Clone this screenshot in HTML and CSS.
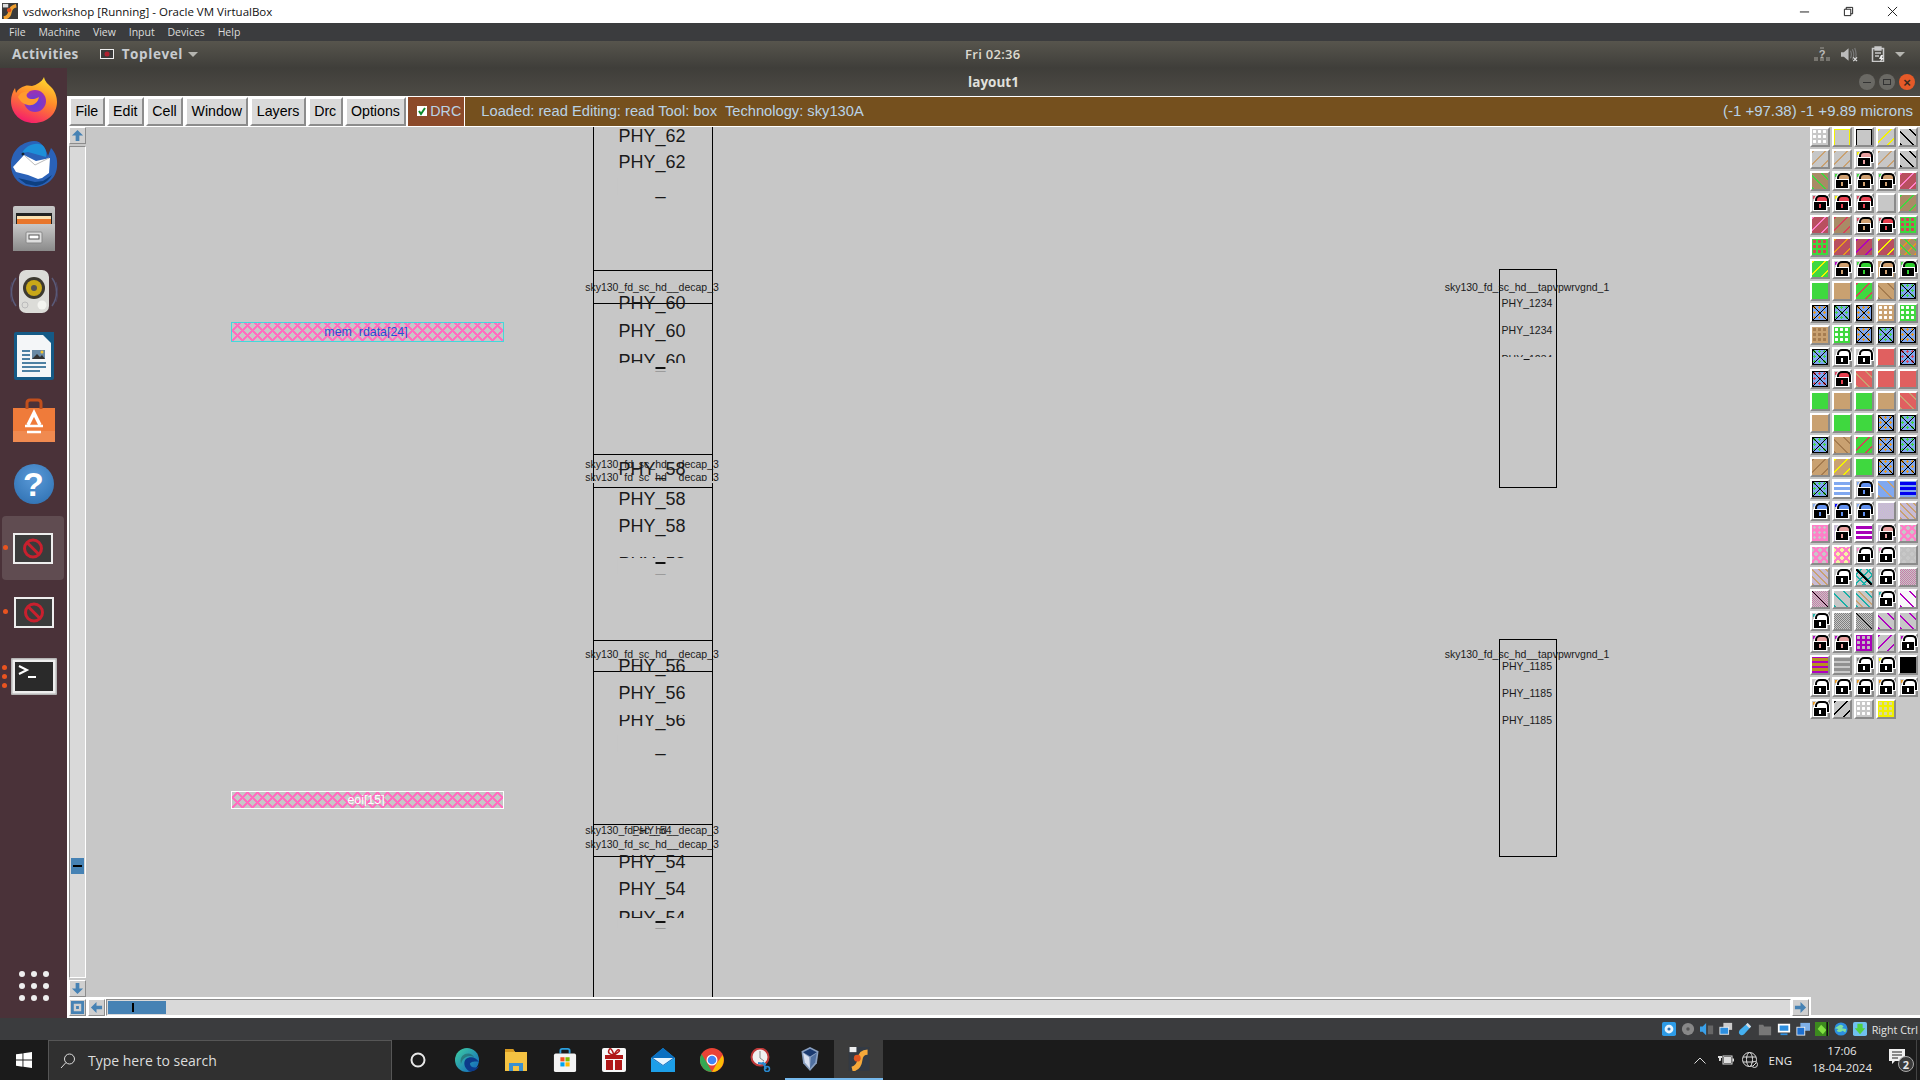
FILE: index.html
```html
<!DOCTYPE html>
<html lang="en">
<head>
<meta charset="utf-8">
<title>vsdworkshop [Running] - Oracle VM VirtualBox</title>
<link rel="stylesheet" href="styles.css">
</head>
<body>
<div class="screen">
  <header class="win-title">
    <svg class="win-logo" viewBox="0 0 18 18"><rect width="18" height="18" fill="#3a3a3a"/><rect x="1" y="1" width="6" height="4" fill="#ddd"/><path d="M2 17 Q8 16 9 10 T16 3" stroke="#f0a030" stroke-width="4" fill="none"/><circle cx="8" cy="8" r="2.5" fill="#e05020"/></svg>
    <span class="win-name">vsdworkshop [Running] - Oracle VM VirtualBox</span>
    <div class="win-controls">
      <svg viewBox="0 0 12 12"><path d="M1 6.500H11" stroke="#111" fill="none"/></svg>
      <svg viewBox="0 0 12 12"><path d="M1.500 3.500H8.500V10.500H1.500ZM3.500 3.500V1.500H10.500V8.500H8.500" stroke="#111" fill="none"/></svg>
      <svg viewBox="0 0 12 12"><path d="M1 1L11 11M11 1L1 11" stroke="#111" fill="none"/></svg>
    </div>
  </header>
  <nav class="vbox-menu">
    <span>File</span><span>Machine</span><span>View</span><span>Input</span><span>Devices</span><span>Help</span>
  </nav>
  <div class="gnome-top">
    <div class="gt-left">
      <span class="gt-activities">Activities</span>
      <svg class="gt-app" viewBox="0 0 14 10"><rect x="0.500" y="0.500" width="13" height="9" fill="#3a3a3a" stroke="#eee"/><circle cx="7" cy="5" r="2.500" fill="#b02030"/></svg>
      <span class="gt-toplevel">Toplevel</span>
      <span class="caret"></span>
    </div>
    <span class="gt-clock">Fri 02:36</span>
    <div class="gt-right">
      <svg class="ic-net" viewBox="0 0 16 16"><path d="M0 11h4v4H0zM6 11h4v4H6zM12 11h4v4H12zM6 1h4v2H6z" fill="#77756f"/><text x="8" y="12" class="qm">?</text></svg>
      <svg class="ic-vol" viewBox="0 0 18 14"><path d="M0 4.500h3l5-4v13l-5-4H0z" fill="#bbb"/><path d="M10 3q2 4 0 8M12 1.500q3 5.500 0 11M14.500 0q3 7 0 14" stroke="#777" stroke-width="1.300" fill="none"/><path d="M13 10l4 4M17 10l-4 4" stroke="#ddd" stroke-width="1.300"/></svg>
      <svg class="ic-clip" viewBox="0 0 14 16"><path d="M1.500 2.500h11v13h-11z" fill="none" stroke="#c9c9c9" stroke-width="1.500"/><path d="M4 1h6v3H4zM4 7h6M4 10h4" stroke="#c9c9c9" stroke-width="1.300" fill="#c9c9c9"/><path d="M10 9l-2 4h2l-1 3 4-4h-2l1-3z" fill="#eee"/></svg>
      <span class="caret light"></span>
    </div>
  </div>
  <div class="desk">
    <aside class="dock">
      <div class="dock-item">
        <svg viewBox="0 0 46 46" class="d46"><defs><linearGradient id="ffa" x1="0.700" y1="0" x2="0.300" y2="1"><stop offset="0" stop-color="#ffd92e"/><stop offset="0.450" stop-color="#ff8a2a"/><stop offset="1" stop-color="#f5186e"/></linearGradient><radialGradient id="ffb" cx="0.500" cy="0.600" r="0.600"><stop offset="0" stop-color="#5a40e0"/><stop offset="1" stop-color="#a030b0"/></radialGradient></defs><path d="M33 0c1 5 4 7 8 11 4 5 5 10 5 14 0 12-10 21-23 21S0 37 0 24c0-5 2-10 4-13l1 5c2-4 5-6 9-7 3-1 5 0 7 0 4-1 10-4 12-9z" fill="url(#ffa)"/><circle cx="24" cy="24" r="11" fill="url(#ffb)"/><path d="M7 20c2-5 7-6 11-5-3 2-3 4-1 6 3 2 8 1 11-1-1 6-6 9-11 8-5-1-8-4-10-8z" fill="#ff9a2e"/></svg>
      </div>
      <div class="dock-item">
        <svg viewBox="0 0 48 48" class="d48"><path d="M24 1C10 2 1 12 1 25c0 13 10 22 23 22 12 0 22-8 23-20 1-9-2-15-6-19l-3 8C36 9 32 1 24 1z" fill="#2a62b8"/><path d="M12 13c3-6 10-10 17-9 6 1 8 7 7 13L18 12z" fill="#1d8fd8"/><circle cx="13" cy="14" r="1.500" fill="#123"/><path d="M3 27l11-12 12 6 14-3-1 15-7 5-4 1-10-4-12-3z" fill="#fff"/><path d="M14 15l11 10 14-7" stroke="#bbb" fill="none"/><path d="M8 38l8 6 10 2c6-1 12-4 16-11l-9 6-8 1z" fill="#0d3f80"/></svg>
      </div>
      <div class="dock-item">
        <svg viewBox="0 0 42 45" class="d42"><defs><linearGradient id="cab" x1="0" y1="0" x2="0" y2="1"><stop offset="0" stop-color="#c8c8c8"/><stop offset="1" stop-color="#8a8a8a"/></linearGradient></defs><rect width="42" height="45" rx="2" fill="url(#cab)"/><rect x="3" y="7" width="36" height="14" fill="#222"/><rect x="4" y="10" width="34" height="3" fill="#fbe0b0"/><rect x="4" y="13" width="34" height="5" fill="#e8762c"/><rect y="18" width="42" height="27" fill="url(#cab)"/><rect x="13" y="26" width="16" height="11" rx="1" fill="#ddd" stroke="#888"/><rect x="16" y="29" width="10" height="4" fill="#fff" stroke="#555"/></svg>
      </div>
      <div class="dock-item">
        <svg viewBox="0 0 48 44" class="d48s"><path d="M6 8a24 24 0 0 0 0 28M42 8a24 24 0 0 1 0 28" stroke="#5a5a78" stroke-width="1.500" fill="none"/><path d="M2 12a30 30 0 0 0 0 20M46 12a30 30 0 0 1 0 20" stroke="#4f4560" fill="none"/><rect x="9" y="0" width="30" height="43" rx="7" fill="#dcdcd8"/><circle cx="24" cy="18" r="11" fill="#3d3a30"/><circle cx="24" cy="18" r="8" fill="#c8a818"/><circle cx="24" cy="18" r="3" fill="#555"/><circle cx="32" cy="35" r="4.500" fill="#f4f4f0"/><circle cx="15" cy="35" r="3" fill="none" stroke="#bbb"/></svg>
      </div>
      <div class="dock-item">
        <svg viewBox="0 0 40 48" class="d40"><rect width="40" height="48" rx="2" fill="#155a86"/><path d="M3 3h26l8 8v34H3z" fill="#f4f6f8"/><path d="M28 0h12v12L28 1z" fill="#155a86"/><rect x="18" y="18" width="13" height="9" fill="#6a8aa5"/><path d="M18 27l5-5 3 3 2-2 3 4z" fill="#333"/><circle cx="28" cy="20" r="1.500" fill="#f2c430"/><path d="M8 19h8M8 23h8M8 27h8M8 31h24M8 35h24M8 39h18" stroke="#155a86" stroke-width="1.700"/></svg>
      </div>
      <div class="dock-item">
        <svg viewBox="0 0 42 43" class="d42"><path d="M0 9h42v34H0z" fill="#ef7b3a"/><path d="M0 32h42v11H0z" fill="#f08a50"/><path d="M14 10V4q0-3 3-3h8q3 0 3 3v6" stroke="#c24f1c" stroke-width="3" fill="none"/><path d="M15 26 21 14 27 26" stroke="#fff" stroke-width="3.500" fill="none"/><path d="M12 27h18M14 33h14" stroke="#fff" stroke-width="2.500"/></svg>
      </div>
      <div class="dock-item">
        <div class="help"><span>?</span></div>
      </div>
      <div class="dock-item active">
        <span class="pip one"></span>
        <svg viewBox="0 0 40 31" class="d40s"><use href="#noentry"/></svg>
      </div>
      <div class="dock-item">
        <span class="pip one"></span>
        <svg viewBox="0 0 40 31" class="d40s"><use href="#noentry"/></svg>
      </div>
      <div class="dock-item">
        <span class="pips"><i></i><i></i><i></i></span>
        <svg viewBox="0 0 46 37" class="d46s"><rect width="46" height="37" rx="1" fill="#b5b5b5"/><rect x="1.500" y="1.500" width="43" height="34" fill="#eee"/><rect x="4" y="4" width="38" height="29" fill="#2a2a2a"/><path d="M8 8l8 4-8 4" stroke="#fff" stroke-width="2" fill="none"/><path d="M17 19h8" stroke="#fff" stroke-width="2"/></svg>
      </div>
      <div class="dock-grid"><i></i><i></i><i></i><i></i><i></i><i></i><i></i><i></i><i></i></div>
    </aside>
    <main class="desk-main">
      <div class="gnome-title">
        <span></span>
        <span class="gn-name">layout1</span>
        <div class="gn-btns">
          <span class="gn-btn"><i class="bar"></i></span>
          <span class="gn-btn"><i class="sq"></i></span>
          <span class="gn-btn close">×</span>
        </div>
      </div>
      <section class="app">
        <div class="toolbar">
          <button class="tb">File</button>
          <button class="tb">Edit</button>
          <button class="tb">Cell</button>
          <button class="tb">Window</button>
          <button class="tb">Layers</button>
          <button class="tb">Drc</button>
          <button class="tb">Options</button>
          <div class="drc">
            <svg viewBox="0 0 10 10" class="chk"><rect width="10" height="10" fill="#fff"/><path d="M2 5l2 3 4-6" stroke="#0a8a2a" stroke-width="2" fill="none"/></svg>
            <span>DRC</span>
          </div>
          <div class="status">
            <span class="st-l">Loaded: read Editing: read Tool: box&nbsp; Technology: sky130A</span>
            <span class="st-r">(-1 +97.38) -1 +9.89 microns</span>
          </div>
        </div>
        <div class="work">
          <div class="vscroll">
            <div class="sb-btn"><svg viewBox="0 0 14 14"><path d="M7 1l6 6H9v6H5V7H1z" fill="#4682b4"/></svg></div>
            <div class="v-trough"><div class="v-thumb"><i></i></div></div>
            <div class="sb-btn"><svg viewBox="0 0 14 14"><path d="M7 13l6-6H9V1H5v6H1z" fill="#4682b4"/></svg></div>
          </div>
          <div class="canvas">
            <div class="cell lc bt-a"></div>
            <div class="cell lc bt-b"></div>
            <div class="cell lc bt-c"></div>
            <div class="cell lc bt-d"></div>
            <div class="cell lc bt-e"></div>
            <div class="cell rc rb-a"></div>
            <div class="cell rc rb-b"></div>

            <div class="pin pin-a"><span>mem_rdata[24]</span></div>
            <div class="pin pin-b"><span>eoi[15]</span></div>

            <span class="lb big xl y9">PHY_62</span>
            <span class="lb big xl y35">PHY_62</span>
            <span class="lb big xl y61 cut-full">PHY_62</span>
            <span class="lb sm xl y160">sky130_fd_sc_hd__decap_3</span>
            <span class="lb big xl y176">PHY_60</span>
            <span class="lb big xl y204">PHY_60</span>
            <span class="lb big xl y234 cut-a">PHY_60</span>
            <span class="lb sm xl y337">sky130_fd_sc_hd__decap_3</span>
            <span class="lb sm xl y350 cut-b">sky130_fd_sc_hd__decap_3</span>
            <span class="lb big xl y342">PHY_58</span>
            <span class="lb big xl y372">PHY_58</span>
            <span class="lb big xl y399">PHY_58</span>
            <span class="lb big xl y437 cut-tip">PHY_58</span>
            <span class="lb sm xl y527">sky130_fd_sc_hd__decap_3</span>
            <span class="lb big xl y539">PHY_56</span>
            <span class="lb big xl y566">PHY_56</span>
            <span class="lb big xl y593 cut-top">PHY_56</span>
            <span class="lb big xl y618 cut-full">PHY_56</span>
            <span class="lb sm xl y703">sky130_fd_sc_hd__decap_3</span>
            <span class="lb sm xl y703">PHY_54</span>
            <span class="lb sm xl y717">sky130_fd_sc_hd__decap_3</span>
            <span class="lb big xl y735">PHY_54</span>
            <span class="lb big xl y762">PHY_54</span>
            <span class="lb big xl y791 cut-c">PHY_54</span>

            <span class="lb sm xr y160">sky130_fd_sc_hd__tapvpwrvgnd_1</span>
            <span class="lb sm xr y176">PHY_1234</span>
            <span class="lb sm xr y203">PHY_1234</span>
            <span class="lb sm xr y232 cut-s">PHY_1234</span>
            <span class="lb sm xr y527">sky130_fd_sc_hd__tapvpwrvgnd_1</span>
            <span class="lb sm xr y539">PHY_1185</span>
            <span class="lb sm xr y566">PHY_1185</span>
            <span class="lb sm xr y593">PHY_1185</span>
          </div>
          <div class="palette">
            <i class="c dt fW"></i><i class="c ybox"></i><i class="c kbox"></i><i class="c sl fY"></i><i class="c bs fK"></i>
            <i class="c sl fT"></i><i class="c sl fT"></i><i class="c l dt fY kP"></i><i class="c sl fT"></i><i class="c bs fK"></i>
            <i class="c bs bB fG"></i><i class="c l dt fG kB"></i><i class="c l dt fG kB"></i><i class="c l dt fG kB"></i><i class="c sl bR fP"></i>
            <i class="c l dt fR kR"></i><i class="c l dt fY kR"></i><i class="c l dt fR kR"></i><i class="c"></i><i class="c dh bB fG"></i>
            <i class="c sl bR fP"></i><i class="c dh bB fR"></i><i class="c l dt fR kB"></i><i class="c l dt fR kR"></i><i class="c dt bG fR"></i>
            <i class="c dt bG fR"></i><i class="c sl bR fO"></i><i class="c sl bR fM"></i><i class="c sl bR fY"></i><i class="c bs sl2 bB fG"></i>
            <i class="c sl bG fY"></i><i class="c l dt fM kB"></i><i class="c l dt fG kG"></i><i class="c l bT kB"></i><i class="c l dt fG kG"></i>
            <i class="c bG"></i><i class="c bT"></i><i class="c dh bG fR"></i><i class="c dh2 bT fB"></i><i class="c xx fG"></i>
            <i class="c xx fO"></i><i class="c xx fG"></i><i class="c xx fO"></i><i class="c dt bT fW"></i><i class="c dt bG fW"></i>
            <i class="c dt bT fB"></i><i class="c dt bG fW"></i><i class="c xx fO"></i><i class="c xx fG"></i><i class="c xx fO"></i>
            <i class="c xx fG"></i><i class="c l"></i><i class="c l"></i><i class="c bS"></i><i class="c xx fR"></i>
            <i class="c xx fR"></i><i class="c l dt fR kR"></i><i class="c bs bS fT"></i><i class="c bS"></i><i class="c bS"></i>
            <i class="c bG"></i><i class="c bT"></i><i class="c bG"></i><i class="c bT"></i><i class="c bs bS fT"></i>
            <i class="c bT"></i><i class="c bG"></i><i class="c bG"></i><i class="c xx fO"></i><i class="c xx fG"></i>
            <i class="c xx fG"></i><i class="c dh2 bT fB"></i><i class="c dh bG fR"></i><i class="c xx fO"></i><i class="c xx fG"></i>
            <i class="c sl bT fB"></i><i class="c sl bT fY"></i><i class="c bG"></i><i class="c xx fO"></i><i class="c xx fO"></i>
            <i class="c xx fG"></i><i class="c wv bL fW"></i><i class="c l dt fL kL"></i><i class="c bs bL fT"></i><i class="c wv bN fL"></i>
            <i class="c l dt fL kL"></i><i class="c l dt fN kL"></i><i class="c l dt fL kL"></i><i class="c fine fA"></i><i class="c bs fine fT"></i>
            <i class="c lat2 bP"></i><i class="c l fine fA kP"></i><i class="c wv bM fW"></i><i class="c l fine fA kP"></i><i class="c lat fP"></i>
            <i class="c lat fP"></i><i class="c lat bY fP"></i><i class="c l dt fP kW"></i><i class="c l dt fP kW"></i><i class="c lat fG2"></i>
            <i class="c bs fine fT2"></i><i class="c l"></i><i class="c hatch"></i><i class="c l"></i><i class="c fine fP2"></i>
            <i class="c bs fine fP2 kline"></i><i class="c bs fC"></i><i class="c bs fC sl3"></i><i class="c l dt fC kW"></i><i class="c dh2 bW fM"></i>
            <i class="c l dt fC kW"></i><i class="c fine fG3"></i><i class="c bs fine fG3 kline"></i><i class="c bs fM"></i><i class="c bs fM"></i>
            <i class="c l dt fM kP"></i><i class="c l dt fM kP"></i><i class="c dt bM fG2"></i><i class="c sl fM"></i><i class="c l dt fM kW"></i>
            <i class="c wv bO fM"></i><i class="c wv bG3 fG4"></i><i class="c l dt fG3 kW"></i><i class="c l dt fY kW"></i><i class="c bK"></i>
            <i class="c l"></i><i class="c l dt fO kW"></i><i class="c l dt fO kW"></i><i class="c l dt fO kW"></i><i class="c l dt fO kW"></i>
            <i class="c l dt fO kW"></i><i class="c sl fK"></i><i class="c dt fW"></i><i class="c dt bY2 fGY"></i>
          </div>
        </div>
        <div class="hscroll">
          <div class="sb-btn"><svg viewBox="0 0 14 14"><path d="M0 0h14v14H0zM3 3v8h8V3zM5.500 5.500h3v3h-3z" fill="#4682b4" fill-rule="evenodd"/></svg></div>
          <div class="sb-btn"><svg viewBox="0 0 14 14"><path d="M1 7l6-6v4h6v4H7v4z" fill="#4682b4"/></svg></div>
          <div class="h-trough"><div class="h-thumb"><i></i></div></div>
          <div class="sb-btn"><svg viewBox="0 0 14 14"><path d="M13 7L7 1v4H1v4h6v4z" fill="#4682b4"/></svg></div>
          <div class="h-rest"></div>
        </div>
      </section>
    </main>
  </div>
  <div class="vbox-status">
    <svg viewBox="0 0 16 16"><rect width="16" height="16" rx="2" fill="#2d9be6"/><circle cx="8" cy="8" r="5" fill="#e8f4fc"/><circle cx="8" cy="8" r="1.800" fill="#2d6fb0"/></svg>
    <svg viewBox="0 0 16 16"><circle cx="8" cy="8" r="7" fill="#888"/><circle cx="8" cy="8" r="2" fill="#555"/></svg>
    <svg viewBox="0 0 16 16"><path d="M0 5h3l4-4v14l-4-4H0z" fill="#3aa0e8"/><rect x="9" y="4" width="6" height="10" fill="#666"/></svg>
    <svg viewBox="0 0 16 16"><rect x="5" y="1" width="10" height="8" fill="#ccc"/><rect x="1" y="6" width="10" height="8" fill="#2d8fe0" stroke="#eee"/></svg>
    <svg viewBox="0 0 16 16"><path d="M11 1l4 4-8 9q-3 2-5 0t0-5z" fill="#45b0f0"/><path d="M11 1l4 4-2 2-4-4z" fill="#ddd"/></svg>
    <svg viewBox="0 0 16 16"><path d="M1 3h5l1 2h8v10H1z" fill="#777"/></svg>
    <svg viewBox="0 0 16 16"><rect x="1" y="2" width="14" height="10" fill="#fff"/><rect x="3" y="4" width="10" height="6" fill="#2d8fe0"/><rect x="4" y="13" width="8" height="2" fill="#2d8fe0"/></svg>
    <svg viewBox="0 0 16 16"><rect x="5" y="1" width="11" height="9" fill="#7fb0e8"/><rect x="1" y="6" width="9" height="9" fill="#1d6fd0" stroke="#eee"/></svg>
    <svg viewBox="0 0 16 16"><rect width="16" height="16" fill="#3c8a1e"/><path d="M3 8l4-5 6 6-4 5z" fill="#7fe040"/><path d="M13 0h2v16h-2z" fill="#111"/></svg>
    <svg viewBox="0 0 16 16"><circle cx="8" cy="8" r="7.500" fill="#2d8fe0"/><path d="M4 5q4-4 7 0l-2 2 5 1-1 4-3-2q-4 3-7 0l2-2-4-1z" fill="#7fe0a0"/></svg>
    <svg viewBox="0 0 16 16"><rect width="16" height="16" rx="2" fill="#6fc0f0"/><path d="M5 2h6v5h3l-6 7-6-7h3z" fill="#50d040"/></svg>
    <span class="rctrl">Right Ctrl</span>
  </div>
  <footer class="taskbar">
    <div class="tk-start"><svg viewBox="0 0 16 16"><path d="M0 2.300l6.500-.9v6.200H0zM7.400 1.300L16 0v7.600H7.400zM0 8.500h6.500v6.200L0 13.800zM7.400 8.500H16V16l-8.600-1.200z" fill="#fff"/></svg></div>
    <div class="tk-search">
      <svg viewBox="0 0 16 16"><circle cx="9.500" cy="6" r="5" fill="none" stroke="#ddd"/><path d="M6 9.500L1 15" stroke="#ddd"/></svg>
      <span>Type here to search</span>
    </div>
    <div class="tk-apps">
      <div class="tk-app"><svg class="t16" viewBox="0 0 16 16"><circle cx="8" cy="8" r="6.500" fill="none" stroke="#e8e8e8" stroke-width="2"/></svg></div>
      <div class="tk-app"><svg viewBox="0 0 24 24"><defs><linearGradient id="edg" x1="0" y1="0" x2="1" y2="1"><stop offset="0" stop-color="#3fd0a0"/><stop offset="1" stop-color="#1060c0"/></linearGradient></defs><circle cx="12" cy="12" r="12" fill="url(#edg)"/><path d="M24 14c-3-5-9-6-13-3-3 3-2 9 3 12 5 1 8-1 10-5-4 3-9 1-9-2 0-2 5-3 9-2z" fill="#0c3a8a"/><path d="M10 6q6-2 9 3-4-2-8 0-4 2-5 7-2-7 4-10z" fill="#1c1c1c" opacity="0.300"/></svg></div>
      <div class="tk-app"><svg viewBox="0 0 22 24"><path d="M0 1h8l2 3h12v19H0z" fill="#f5c242"/><path d="M0 1h8l2 3H0z" fill="#d89a20"/><rect x="4" y="15" width="14" height="8" fill="#3a90d0"/><rect x="8" y="18" width="6" height="5" fill="#f5c242"/></svg></div>
      <div class="tk-app"><svg viewBox="0 0 24 26"><path d="M7 6V3q0-2 2-2h6q2 0 2 2v3" fill="none" stroke="#2aa0e0" stroke-width="2"/><rect y="6" width="24" height="20" rx="2" fill="#f4f4f4"/><rect x="7" y="10" width="4.500" height="4.500" fill="#f25022"/><rect x="12.500" y="10" width="4.500" height="4.500" fill="#7fba00"/><rect x="7" y="15.500" width="4.500" height="4.500" fill="#00a4ef"/><rect x="12.500" y="15.500" width="4.500" height="4.500" fill="#ffb900"/></svg></div>
      <div class="tk-app"><svg viewBox="0 0 24 24"><rect width="24" height="24" rx="2" fill="#f8f8f8"/><rect x="3" y="7" width="18" height="4" fill="#b01818"/><rect x="4" y="12" width="7" height="10" fill="#b01818"/><rect x="13" y="12" width="7" height="10" fill="#b01818"/><path d="M12 7Q5 6 7 2t5 5q3-6 5-5t-5 5z" fill="none" stroke="#b01818" stroke-width="1.500"/></svg></div>
      <div class="tk-app"><svg viewBox="0 0 24 24"><path d="M12 0l12 10v14H0V10z" fill="#1d9fe8"/><path d="M0 10h24l-12 8z" fill="#c8ecff"/><path d="M12 0l12 10-12 8L0 10z" fill="#0a6fc0"/><path d="M2 10h20l-10 7z" fill="#e8f6ff"/></svg></div>
      <div class="tk-app"><svg viewBox="0 0 24 24"><circle cx="12" cy="12" r="12" fill="#ea4335"/><path d="M12 24A12 12 0 0 1 1.600 6L7 15z" fill="#34a853"/><path d="M12 24l5-9 5.600-8A12 12 0 0 1 12 24z" fill="#fbbc05"/><circle cx="12" cy="12" r="5.500" fill="#fff"/><circle cx="12" cy="12" r="4.300" fill="#4285f4"/></svg></div>
      <div class="tk-app"><svg viewBox="0 0 24 24"><circle cx="11" cy="9" r="8.500" fill="#f0f0f0" stroke="#c03838" stroke-width="2"/><path d="M11 3v7l4 3" stroke="#888" fill="none"/><path d="M14 14l3 7M9 15l8 1" stroke="#2a8ad0" stroke-width="2" fill="none"/><circle cx="18" cy="21" r="2.500" fill="none" stroke="#2a8ad0" stroke-width="1.500"/></svg></div>
      <div class="tk-app"><svg viewBox="0 0 22 28"><path d="M11 0l10 5-2 14-8 9-8-9L1 5z" fill="#8aa0c0"/><path d="M11 2l8 4-8 5-8-5z" fill="#1a3a70"/><path d="M3 7l7 5 1 13-6-7z" fill="#d8e0f0"/><path d="M19 7l-7 5-1 13 6-7z" fill="#5070a0"/></svg></div>
      <div class="tk-app on"><svg viewBox="0 0 24 28"><rect width="24" height="28" fill="#333a44"/><rect x="1" y="0" width="8" height="6" fill="#eee"/><path d="M4 26Q12 24 13 15T22 6" stroke="#f5a83a" stroke-width="6" fill="none"/><circle cx="10" cy="13" r="4" fill="#e05520"/></svg></div>
    </div>
    <div class="tk-tray">
      <svg class="ti-chev" viewBox="0 0 12 7"><path d="M0.500 6.500L6 1l5.500 5.500" fill="none" stroke="#ddd"/></svg>
      <svg class="ti-bat" viewBox="0 0 16 10"><path d="M0 1v2h4V1zM1 3h2v2q0 1-1 1H1z" fill="#ddd"/><rect x="5" y="1" width="9" height="8" fill="none" stroke="#ddd"/><rect x="6" y="2" width="7" height="6" fill="#ddd"/><rect x="14.500" y="3.500" width="1.500" height="3" fill="#ddd"/></svg>
      <svg class="ti-net" viewBox="0 0 16 16"><circle cx="7.500" cy="7.500" r="7" fill="none" stroke="#ddd"/><ellipse cx="7.500" cy="7.500" rx="3" ry="7" fill="none" stroke="#ddd"/><path d="M1 5h13M1 10h13" stroke="#ddd"/><circle cx="12.500" cy="12.500" r="3" fill="#1c1c1c" stroke="#ddd"/><path d="M11 14l3-3" stroke="#ddd"/></svg>
      <span class="ti-eng">ENG</span>
      <div class="ti-clock"><span>17:06</span><span>18-04-2024</span></div>
      <div class="ti-note">
        <svg viewBox="0 0 16 16"><path d="M0 0h16v12H6l-3 3v-3H0z" fill="#f0f0f0"/><path d="M3 3h10M3 6h10M3 9h6" stroke="#222"/></svg>
        <span class="ti-badge">2</span>
      </div>
      <span class="ti-edge"></span>
    </div>
  </footer>
</div>
<svg class="defs" width="0" height="0"><defs><g id="noentry"><rect width="40" height="31" fill="#eee"/><rect x="2" y="2" width="36" height="27" fill="#3b3b3b"/><circle cx="20" cy="15.500" r="8.500" fill="none" stroke="#c8202e" stroke-width="3"/><path d="M14 9.500l12 12" stroke="#c8202e" stroke-width="3"/></g></defs></svg>
</body>
</html>
```
FILE: styles.css
```css
* { box-sizing: border-box; }
html, body { margin: 0; padding: 0; }
body { width: 1920px; height: 1080px; overflow: hidden; font-family: "Liberation Sans", Arial, sans-serif; background: #3b3c3e; }
.screen { display: flex; flex-direction: column; width: 1920px; height: 1080px; }
.defs { position: absolute; }

/* Windows title */
.win-title { height: 23px; background: #fff; display: flex; align-items: center; padding: 0 0 1px 2px; font: 11.500px "Open Sans", sans-serif; color: #111; flex: none; }
.win-logo { width: 16px; height: 16px; margin-right: 5px; }
.win-controls { margin-left: auto; display: flex; align-items: center; gap: 33px; padding-right: 22px; }
.win-controls svg { width: 11px; height: 11px; display: block; }

/* VBox menu */
.vbox-menu { height: 18px; background: #3b3c3e; color: #dcdcdc; display: flex; align-items: center; gap: 12.800px; padding: 0 0 1px 9px; font: 10.500px "Open Sans", sans-serif; flex: none; }

/* GNOME top */
.gnome-top { height: 27px; flex: none; display: grid; grid-template-columns: 965px auto 1fr; align-items: center; padding-bottom: 1px; background: linear-gradient(#57554d, #3f3e3a); color: #d5d5d0; font: 700 13.500px "Open Sans", sans-serif; }
.gt-left { display: flex; align-items: center; padding-left: 12px; }
.gt-activities { letter-spacing: 0.400px; color: #c8ccd0; }
.gt-app { width: 14px; height: 10px; margin-left: 21px; }
.gt-toplevel { margin-left: 8px; letter-spacing: 0.600px; color: #c8ccd0; }
.caret { width: 0; height: 0; margin-left: 5px; border-left: 5px solid transparent; border-right: 5px solid transparent; border-top: 5px solid #b5b5b0; }
.gt-clock { font-size: 13px; font-weight: 600; color: #dddad0; letter-spacing: 0.300px; }
.gt-right { display: flex; align-items: center; justify-content: flex-end; padding-right: 15px; gap: 11px; }
.ic-net { width: 16px; height: 16px; }
.qm { font: 700 11px "Liberation Sans", sans-serif; fill: #bbb; text-anchor: middle; }
.ic-vol { width: 17px; height: 15px; }
.ic-clip { width: 14px; height: 16px; margin-left: 2px; }
.caret.light { margin-left: -1px; }

.desk { flex: 1; display: flex; min-height: 0; }

/* Dock */
.dock { width: 67px; flex: none; background: #4a3239; display: flex; flex-direction: column; align-items: stretch; padding-bottom: 17px; }
.dock-item { height: 64px; position: relative; display: flex; align-items: center; justify-content: center; flex: none; }
.dock-item.active { margin: 0 3px 0 2px; background: #604c51; border-radius: 4px; }
.d46 { width: 46px; height: 46px; }
.d48 { width: 48px; height: 48px; }
.d42 { width: 42px; height: 45px; }
.d48s { width: 48px; height: 44px; }
.d40 { width: 40px; height: 48px; }
.d40s { width: 40px; height: 31px; }
.d46s { width: 46px; height: 37px; }
.help { width: 40px; height: 40px; border-radius: 50%; background: radial-gradient(circle at 50% 35%, #5a9ad8, #2a6cae); display: flex; align-items: center; justify-content: center; color: #fff; font: 700 34px "Liberation Sans", sans-serif; }
.pip { position: absolute; left: 3px; top: 29px; width: 5px; height: 5px; border-radius: 50%; background: #e95420; }
.dock-item.active .pip { left: 1px; }
.pips { position: absolute; left: 2px; top: 21px; display: flex; flex-direction: column; gap: 4px; }
.pips i { display: block; width: 5px; height: 5px; border-radius: 50%; background: #e95420; }
.dock-grid { margin-top: auto; display: grid; grid-template-columns: repeat(3, 6px); gap: 6px; justify-content: center; }
.dock-grid i { display: block; width: 6px; height: 6px; border-radius: 50%; background: #eee; }

.desk-main { flex: 1; min-width: 0; display: flex; flex-direction: column; }
.gnome-title { height: 28px; flex: none; display: grid; grid-template-columns: 1fr auto 1fr; align-items: center; background: linear-gradient(#3f3e3a, #4d4b45); color: #e0e0dc; font: 700 13.500px "Open Sans", sans-serif; }
.gn-btns { display: flex; justify-content: flex-end; gap: 4px; padding-right: 5px; }
.gn-btn { width: 16px; height: 16px; border-radius: 50%; background: #6a6964; display: flex; align-items: center; justify-content: center; color: #3a2a20; font: 700 13px "Liberation Sans", sans-serif; }
.gn-btn.close { background: #e65a28; }
.gn-btn .bar { display: block; width: 8px; height: 1px; background: #333; }
.gn-btn .sq { display: block; width: 8px; height: 6px; border: 1px solid #333; }

/* App */
.app { flex: 1; min-height: 0; display: flex; flex-direction: column; background: #fff; padding: 1px 0 1px 2px; }
.toolbar { height: 29px; flex: none; display: flex; gap: 2px; }
.tb { border: 2px solid; border-color: #fff #8c8c8c #8c8c8c #fff; background: #d9d9d9; padding: 0 4.400px 2px; font: 14.200px "Liberation Sans", sans-serif; color: #000; height: 29px; margin: 0; }
.drc { width: 56px; background: #8c4a2a; display: flex; align-items: center; padding: 0 0 2px 9px; gap: 3px; color: #b9d3e6; font-size: 14.300px; }
.chk { width: 10px; height: 10px; }
.status { flex: 1; margin-left: -1px; background: #75501e; color: #b9d3e6; display: flex; justify-content: space-between; align-items: center; padding: 0 7px 2px 16px; font-size: 14.700px; }
.st-r { font-size: 15px; }
.work { flex: 1; min-height: 0; display: flex; background: #c7c7c7; margin-top: 1px; }
.vscroll { width: 19px; flex: none; display: flex; flex-direction: column; background: #c7c7c7; }
.sb-btn { width: 17px; height: 17px; flex: none; border: 1px solid; border-color: #fff #8c8c8c #8c8c8c #fff; background: #cfcfcf; padding: 1px; }
.sb-btn svg { display: block; width: 13px; height: 13px; }
.v-trough { flex: 1; margin: 2px 0; width: 17px; background: #d9d9d9; border: 1px solid; border-color: #8c8c8c #fff #fff #8c8c8c; padding: 0 1px; position: relative; }
.v-thumb { position: absolute; left: 1px; top: 711px; width: 13px; height: 16px; background: #4682b4; display: flex; align-items: center; justify-content: center; }
.v-thumb i { display: block; width: 9px; height: 2px; background: #000; }
.canvas { flex: 1; min-width: 0; position: relative; overflow: hidden; background: #c7c7c7; }
.palette { width: 112px; flex: none; padding: 0 0 0 2px; display: grid; grid-template-columns: repeat(5, 20px); grid-auto-rows: 20px; gap: 2px; align-content: start; }

/* canvas items */
.cell { position: absolute; border: 1px solid #000; }
.lc { left: 505px; width: 120px; }
.rc { left: 1411px; width: 58px; }
.bt-a { top: -20px; height: 197px; }
.bt-b { top: 143px; height: 218px; }
.bt-c { top: 327px; height: 218px; }
.bt-d { top: 513px; height: 217px; }
.bt-e { top: 697px; height: 300px; }
.rb-a { top: 142px; height: 219px; }
.rb-b { top: 512px; height: 218px; }

.pin { position: absolute; left: 143px; width: 273px; height: 20px; display: flex; align-items: center; justify-content: center; padding-right: 3px; font-size: 12.400px; border: 1px solid; background-image: repeating-linear-gradient(45deg, #ff6fbf 0 1.700px, transparent 1.700px 7.070px), repeating-linear-gradient(-45deg, #ff6fbf 0 1.700px, transparent 1.700px 7.070px); }
.pin span { display: block; height: 12px; line-height: 13px; overflow: hidden; }
.pin-a { top: 195px; border-color: #44d8dc; color: #2a4fd0; }
.pin-b { top: 664px; height: 18px; border-color: #fff; color: #fff; }

.lb { position: absolute; transform: translate(-50%, -50%); white-space: nowrap; color: #1a1a1a; }
.big { font-size: 18px; line-height: 20px; }
.sm { font-size: 10.500px; line-height: 12px; }
.xl { left: 564px; }
.xr { left: 1439px; }
.y9 { top: 9px; } .y35 { top: 35px; } .y61 { top: 61px; } .y160 { top: 160px; } .y176 { top: 176px; }
.y203 { top: 203px; } .y204 { top: 204px; } .y232 { top: 232px; } .y234 { top: 234px; } .y337 { top: 337px; }
.y342 { top: 342px; } .y350 { top: 350px; } .y372 { top: 372px; } .y399 { top: 399px; } .y437 { top: 437px; }
.y527 { top: 527px; } .y539 { top: 539px; } .y566 { top: 566px; } .y593 { top: 593px; } .y618 { top: 618px; }
.y703 { top: 703px; } .y717 { top: 717px; } .y735 { top: 735px; } .y762 { top: 762px; } .y791 { top: 791px; }
.cut-full::after, .cut-a::after, .cut-tip::after, .cut-b::after, .cut-c::after, .cut-s::after, .cut-top::after { content: ""; position: absolute; left: -1px; right: -1px; background: #c7c7c7; }
.cut-full::after { top: 0; height: 17px; }
.cut-top::after { top: 0; height: 5px; }
.cut-b::after { top: 10px; height: 2px; }
/* Clipped labels: top of the glyphs stays visible, the underscore sits right below it */
.cut-a::after { top: 12px; bottom: 0; }
.cut-tip::after { top: 4px; bottom: 0; }
.cut-c::after { top: 10px; bottom: 0; }
.cut-s::after { top: 4px; bottom: 0; }
.cut-a::before, .cut-tip::before, .cut-c::before, .cut-s::before { content: ""; position: absolute; z-index: 1; background: #111; left: 37px; width: 10px; height: 1.500px; }
.cut-a::before { top: 16px; }
.cut-tip::before { top: 8px; }
.cut-c::before { top: 13px; }
.cut-s::before { top: 6px; left: 21.600px; width: 6px; height: 1px; }

/* Horizontal scroll */
.hscroll { height: 20px; flex: none; display: flex; background: #fff; padding-top: 2px; gap: 2px; }
.hscroll .sb-btn { height: 17px; }
.h-trough { width: 1685px; height: 17px; background: #d9d9d9; border: 1px solid; border-color: #8c8c8c #fff #fff #8c8c8c; padding: 1px; margin: 0 -1px 0 -1px; }
.h-thumb { width: 58px; height: 13px; background: #4682b4; display: flex; align-items: center; justify-content: center; }
.h-thumb i { display: block; width: 2px; height: 9px; background: #000; margin-left: -8px; }
.h-rest { flex: 1; background: #c7c7c7; margin: -2px 0 2px; }

/* Palette */
.c { display: block; position: relative; --f: transparent; border: 2px solid; border-color: #fff #8a8a8a #8a8a8a #fff; background-color: #c7c7c7; }
.fW { --f: #fff; } .fY { --f: #f4f400; } .fK { --f: #000; } .fT { --f: #c9a171; } .fG { --f: #3fd83f; } .fP { --f: #ff7fc8; }
.fR { --f: #d9405a; } .fO { --f: #e8981e; } .fM { --f: #b000c0; } .fB { --f: #a57c50; } .fL { --f: #80a8f0; } .fN { --f: #0000ff; }
.fA { --f: #c8b0e0; } .fC { --f: #18b0a8; } .fT2 { --f: #c9a171; } .fP2 { --f: #c87aa8; } .fG2 { --f: #c0c0c0; } .fG3 { --f: #808080; } .fG4 { --f: #c7c7c7; } .fGY { --f: #d8d8a0; }
.bB { background-color: #a98b66; } .bR { background-color: #b94f5f; } .bG { background-color: #3fd83f; } .bT { background-color: #c9a171; }
.bS { background-color: #e06060; } .bL { background-color: #80a8f0; } .bN { background-color: #0000f0; } .bP { background-color: #ff7fc8; }
.bM { background-color: #a800b8; } .bO { background-color: #b8901f; } .bY { background-color: #f4f4a0; } .bK { background-color: #000; }
.bW { background-color: #f8f8f8; } .bG3 { background-color: #909090; } .bY2 { background-color: #f0f000; }
.sl { background-image: repeating-linear-gradient(135deg, var(--f) 0 1.500px, transparent 1.500px 8.500px); }
.bs { background-image: repeating-linear-gradient(45deg, var(--f) 0 1.500px, transparent 1.500px 8.500px); }
.sl2 { background-image: repeating-linear-gradient(45deg, #3fd83f 0 1.200px, transparent 1.200px 7px), repeating-linear-gradient(135deg, #e8981e 0 1.200px, transparent 1.200px 7px); }
.sl3 { background-image: repeating-linear-gradient(45deg, #18b0a8 0 1.500px, transparent 1.500px 4px, #c9a171 4px 5.500px, transparent 5.500px 8.500px); }
.dt { background-image: radial-gradient(var(--f) 1.400px, transparent 1.600px); background-size: 5px 5px; background-position: 0 0; }
.dh { background-image: repeating-linear-gradient(135deg, var(--f) 0 1.500px, transparent 1.500px 8.500px), linear-gradient(90deg, transparent 50%, transparent 50%); }
.dh2 { background-image: repeating-linear-gradient(45deg, var(--f) 0 1.500px, transparent 1.500px 8.500px); }
.wv { background-image: repeating-linear-gradient(0deg, var(--f) 0 2px, transparent 2px 5px); }
.fine { background-image: repeating-conic-gradient(var(--f) 0 25%, transparent 0 50%); background-size: 2px 2px; }
.bs.fine { background-image: repeating-linear-gradient(45deg, var(--f) 0 1.500px, transparent 1.500px 5px), repeating-conic-gradient(#c8b0e0 0 25%, transparent 0 50%); background-size: auto, 2px 2px; }
.kline { box-shadow: inset 0 0 0 0 #000; background-image: linear-gradient(135deg, transparent 47%, #000 47% 53%, transparent 53%), repeating-conic-gradient(var(--f) 0 25%, transparent 0 50%); background-size: auto, 2px 2px; }
.bs.fine.kline { background-image: linear-gradient(45deg, transparent 47%, #000 47% 53%, transparent 53%), repeating-conic-gradient(var(--f) 0 25%, transparent 0 50%); }
.lat { background-image: repeating-linear-gradient(45deg, var(--f) 0 1.800px, transparent 1.800px 5.600px), repeating-linear-gradient(-45deg, var(--f) 0 1.800px, transparent 1.800px 5.600px); }
.lat2 { background-image: radial-gradient(#c7c7c7 1px, transparent 1.500px); background-size: 5px 5px; }
.hatch { background-image: linear-gradient(45deg, transparent 46%, #000 46% 54%, transparent 54%), repeating-linear-gradient(45deg, #18b0a8 0 1.300px, transparent 1.300px 6px), repeating-linear-gradient(-45deg, #18b0a8 0 1.300px, transparent 1.300px 6px); }
.ybox { box-shadow: inset 1px 1px 0 #f4f400, inset -1px 0 0 #f4f400; }
.kbox { box-shadow: inset 1px 1px 0 #000, inset -1px 0 0 #000; }
.xx { background-color: #80a8f0; box-shadow: inset 0 0 0 1px #000; background-image: linear-gradient(45deg, transparent 47%, #000 47% 53%, transparent 53%), linear-gradient(-45deg, transparent 47%, #000 47% 53%, transparent 53%), radial-gradient(var(--f) 1.200px, transparent 1.400px); background-size: auto, auto, 5px 5px; }

/* Lock overlay */
.l { --k: #fff; }
.kP { --k: #e8a0a0; } .kB { --k: #d0a070; } .kR { --k: #e84050; } .kG { --k: #30d030; } .kL { --k: #6090f0; } .kW { --k: #fff; }
.l::before { content: ""; position: absolute; left: 3px; top: 0; width: 10px; height: 9px; background: var(--k); border: 2px solid #000; border-bottom: 0; border-radius: 5px 5px 0 0; box-shadow: 0 0 0 1px #fff; }
.l::after { content: ""; position: absolute; left: 2px; top: 7px; width: 12px; height: 8px; background: linear-gradient(var(--k), var(--k)) center 2px / 2px 4px no-repeat, #000; box-shadow: 0 0 0 1px #fff; }

/* VBox status */
.vbox-status { height: 22px; flex: none; display: flex; align-items: center; justify-content: flex-end; gap: 5.200px; background: #3b3c3e; padding-right: 2px; }
.vbox-status svg { width: 14px; height: 14px; display: block; }
.rctrl { color: #e4e4e4; font: 10.800px "Open Sans", sans-serif; white-space: nowrap; margin-left: -1px; }

/* Taskbar */
.taskbar { height: 40px; flex: none; background: #1b1b1b; display: flex; align-items: stretch; color: #e8e8e8; font-family: "Open Sans", sans-serif; }
.tk-start { width: 48px; display: flex; align-items: center; justify-content: center; }
.tk-start svg { width: 16px; height: 16px; }
.tk-search { width: 344px; background: #303030; border: 1px solid #565656; border-bottom: 0; display: flex; align-items: center; padding-left: 11px; gap: 12px; color: #ddd; font-size: 14px; }
.tk-search svg { width: 16px; height: 16px; }
.tk-apps { display: flex; margin-left: 1px; }
.tk-app { width: 49px; display: flex; align-items: center; justify-content: center; position: relative; }
.tk-app svg { width: 24px; height: 24px; }
.tk-app svg.t16 { width: 16px; height: 16px; }
.tk-app.on { background: #3c3c3c; border-bottom: 2px solid #76b9ed; }
.tk-app:nth-child(9) { border-bottom: 2px solid #76b9ed; }
.tk-tray { margin-left: auto; display: flex; align-items: center; font-size: 11.500px; }
.ti-chev { width: 12px; height: 7px; margin-right: 12px; }
.ti-bat { width: 16px; height: 10px; margin-right: 8px; }
.ti-net { width: 16px; height: 16px; margin-right: 11px; }
.ti-eng { font-size: 11.500px; margin-right: 20px; }
.ti-clock { display: flex; flex-direction: column; align-items: center; gap: 2px; padding-bottom: 2px; line-height: 15px; font-size: 11.500px; width: 60px; }
.ti-note { position: relative; width: 26px; height: 24px; margin-left: 15px; }
.ti-note svg { position: absolute; left: 2px; top: 1px; width: 16px; height: 16px; }
.ti-badge { position: absolute; left: 11px; top: 8px; width: 16px; height: 16px; border-radius: 50%; background: #3a3a3a; border: 1px solid #aaa; display: flex; align-items: center; justify-content: center; font-weight: 700; font-size: 11px; }
.ti-edge { width: 1px; height: 40px; background: #444; margin-left: 3px; margin-right: 3px; }
```
